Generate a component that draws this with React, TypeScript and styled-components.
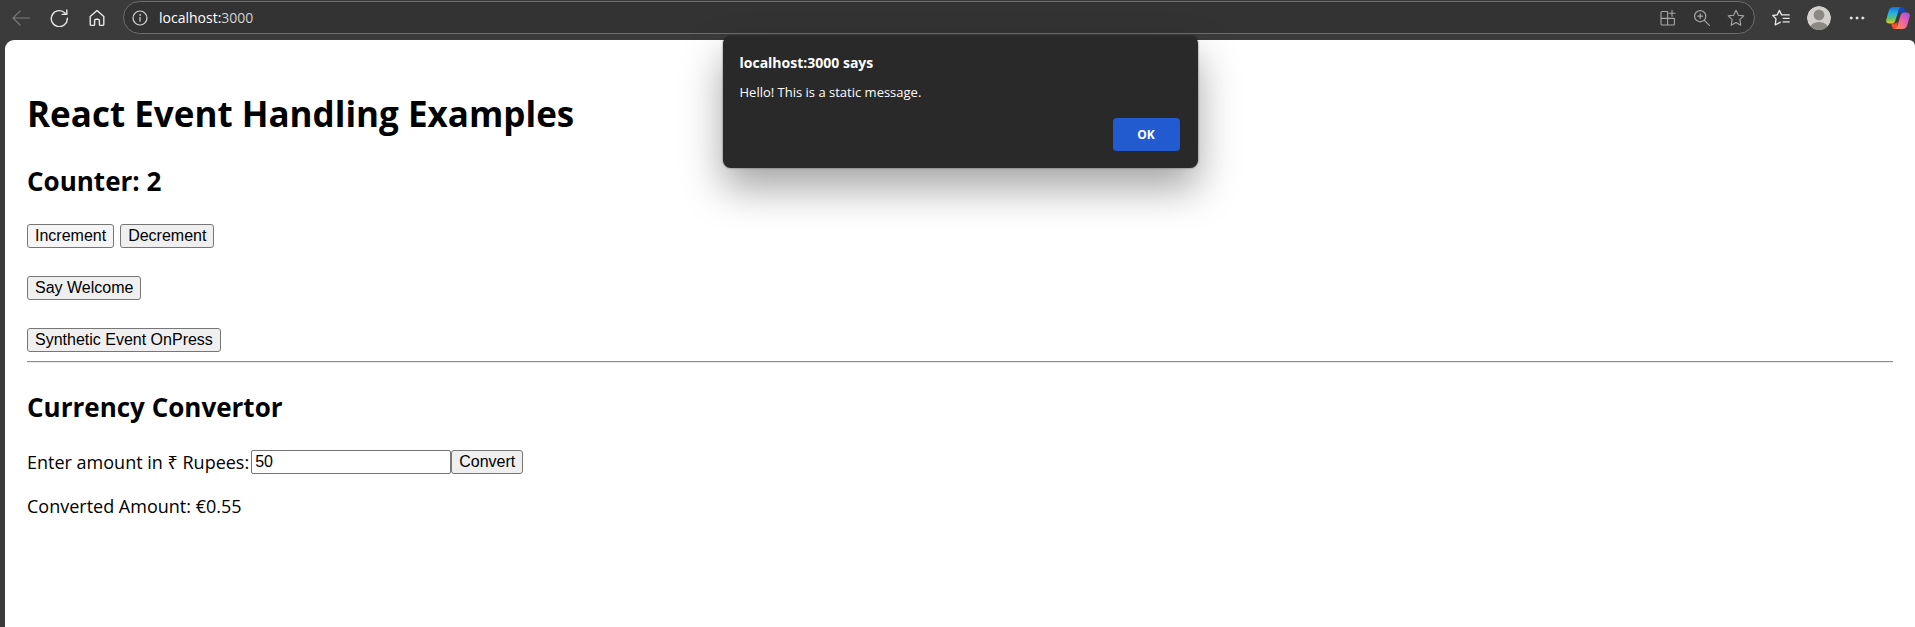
import React, { useState } from "react";
import styled, { createGlobalStyle } from "styled-components";

const ui = `"Segoe UI", "Open Sans", "Noto Sans", sans-serif`;
const arial = `"Liberation Sans", Arial, sans-serif`;

const GlobalStyle = createGlobalStyle`
  * { box-sizing: border-box; }
  body { margin: 0; background: #3b3b3b; font-family: ${ui}; color: #000; }
`;

const Window = styled.div`
  position: relative;
  display: flex;
  flex-direction: column;
  min-height: 100vh;
  overflow: hidden;
`;

const Toolbar = styled.header`
  display: flex;
  align-items: center;
  gap: 17px;
  height: 40px;
  padding: 0 5px 5px 12px;
`;

const IconGroup = styled.div<{ $gap: number }>`
  display: flex;
  flex: none;
  align-items: center;
  gap: ${(p) => p.$gap}px;
`;

const IconButton = styled.button<{ $tone?: string; $size?: number }>`
  display: flex;
  flex: none;
  align-items: center;
  justify-content: center;
  width: ${(p) => p.$size ?? 18}px;
  height: ${(p) => p.$size ?? 18}px;
  padding: 0;
  border: 0;
  background: none;
  color: ${(p) => p.$tone ?? "#e8e8e8"};

  svg {
    display: block;
    width: 100%;
    height: 100%;
    fill: none;
    stroke: currentColor;
    stroke-linecap: round;
    stroke-linejoin: round;
  }
`;

const AddressBar = styled.div`
  display: flex;
  flex: 1;
  align-items: center;
  gap: 10px;
  height: 33px;
  padding: 0 9px 0 7px;
  border: 1px solid #6e6e6e;
  border-radius: 17px;
  background: #333;
`;

const Address = styled.div`
  flex: 1;
  font-size: 14px;
  line-height: 20px;
  color: #d0d0d0;
`;

const Host = styled.span`
  color: #fff;
`;

const Page = styled.main`
  flex: 1;
  margin-left: 5px;
  padding: 46px 22px 32px;
  border-radius: 9px 6px 0 0;
  background: #fff;
`;

const Title = styled.h1`
  margin: 0;
  font-size: 35px;
  font-weight: 700;
  line-height: 56px;
`;

const Heading = styled.h2`
  margin: 21px 0 25px;
  font-size: 26px;
  font-weight: 700;
  line-height: 36px;
`;

const Actions = styled.div`
  display: flex;
  flex-direction: column;
  gap: 28px;
`;

const ButtonRow = styled.div`
  display: flex;
  gap: 6px;
`;

const Button = styled.button<{ $hovered?: boolean }>`
  height: 24px;
  padding: 0 7px;
  border: 1px solid #767676;
  border-radius: 3px;
  background: ${(p) => (p.$hovered ? "#f5f5f5" : "#efefef")};
  color: #000;
  font: 16px/20px ${arial};
`;

const Rule = styled.hr`
  height: 2px;
  margin: 9px 0 26px;
  border: 0;
  border-top: 1px solid #8e8e8e;
  border-bottom: 1px solid #ececec;
`;

const Field = styled.div`
  display: flex;
  align-items: center;
  font-size: 18px;
  line-height: 24px;
`;

const AmountInput = styled.input`
  width: 200px;
  height: 24px;
  margin-left: 2px;
  padding: 0 3px;
  border: 1px solid #767676;
  border-radius: 2px;
  font: 16px/20px ${arial};
  color: #000;
`;

const Result = styled.p`
  margin: 18px 0 0;
  font-size: 18px;
  line-height: 28px;
`;

const DialogLayer = styled.div`
  position: absolute;
  top: 36px;
  left: 5px;
  right: 0;
  display: flex;
  justify-content: center;
`;

const Dialog = styled.div`
  width: 475px;
  padding: 17px 18px 17px 17px;
  border-radius: 8px;
  background: #292929;
  color: #fff;
  box-shadow: 0 0 2px rgba(0, 0, 0, 0.6), 0 20px 40px rgba(0, 0, 0, 0.36);
`;

const DialogTitle = styled.div`
  font-size: 14px;
  font-weight: 700;
  line-height: 20px;
`;

const DialogText = styled.div`
  margin: 9px 0 16px;
  font-size: 13px;
  line-height: 20px;
`;

const DialogActions = styled.div`
  display: flex;
  justify-content: flex-end;
`;

const OkButton = styled.button`
  width: 67px;
  height: 33px;
  border: 0;
  border-radius: 4px;
  background: #225bcf;
  color: #fff;
  font: 700 12px/18px ${ui};
`;

const muted = "#a6a6a6";
const starPath = "M9 1.2l2.4 5 5.4.7-4 3.8 1 5.5L9 13.5l-4.800 2.700 1-5.500-4-3.800 5.400-.7z";

const BackIcon = () => (
  <svg viewBox="0 0 18 18" strokeWidth="1.2"><path d="M17.3 9H1M8.2 1.8L1 9l7.2 7.2" /></svg>
);

const ReloadIcon = () => (
  <svg viewBox="0 0 18 18" strokeWidth="1.4">
    <path d="M17.3 9.2A8 8 0 1 1 15.2 4.2M16.8 1v4.4h-4.6" />
  </svg>
);

const HomeIcon = () => (
  <svg viewBox="0 0 18 18" strokeWidth="1.4">
    <path d="M2.2 7.6L9 1.4l6.8 6.2v7.6c0 .7-.5 1.2-1.2 1.2h-2.2c-.6 0-1-.5-1-1v-3.6c0-1-.7-1.6-1.6-1.6H8.2c-.9 0-1.6.6-1.6 1.6v3.6c0 .5-.4 1-1 1H3.400c-.7 0-1.200-.5-1.200-1.200z" />
  </svg>
);

const InfoIcon = () => (
  <svg viewBox="0 0 18 18" strokeWidth="1.2">
    <circle cx="9" cy="9" r="7" />
    <path d="M9 8.4v3.8" />
    <circle cx="9" cy="5.9" r=".5" fill="currentColor" strokeWidth=".6" />
  </svg>
);

const AppsIcon = () => (
  <svg viewBox="0 0 18 18" strokeWidth="1.1">
    <path d="M8.6 2.5H3c-.6 0-1 .4-1 1V15c0 .6.4 1 1 1h11.4c.6 0 1-.4 1-1V9.400H2M8.600 2.500V16M13 1.200v6M10 4.200h6" />
  </svg>
);

const ZoomIcon = () => (
  <svg viewBox="0 0 18 18" strokeWidth="1.2">
    <circle cx="7.2" cy="7.2" r="5.6" />
    <path d="M11.4 11.4l5 5M7.2 4.8v4.8M4.8 7.2h4.8" />
  </svg>
);

const StarIcon = () => (
  <svg viewBox="0 0 18 18" strokeWidth="1.1"><path d={starPath} /></svg>
);

const FavouritesIcon = () => (
  <svg viewBox="0 0 18 18" strokeWidth="1.3">
    <path d="M9.6 5.9L7.4 1.4 5.2 5.9.8 6.5 4 9.9l-.8 5.9 5.2-2.6M9.6 5.9h7.6M11.2 9.3h6M11.2 12.9h6" />
  </svg>
);

const AvatarIcon = () => (
  <svg viewBox="0 0 24 24" style={{ stroke: "none" }}>
    <defs>
      <clipPath id="avatar-clip"><circle cx="12" cy="12" r="12" /></clipPath>
    </defs>
    <g clipPath="url(#avatar-clip)">
      <circle cx="12" cy="12" r="12" fill="#d2d0cd" />
      <circle cx="12" cy="9" r="5.4" fill="#8c8985" />
      <ellipse cx="12" cy="22" rx="9" ry="6" fill="#8c8985" />
    </g>
  </svg>
);

const MoreIcon = () => (
  <svg viewBox="0 0 18 18" strokeWidth=".4">
    <g fill="currentColor">
      <circle cx="3.2" cy="9" r="1.2" />
      <circle cx="9" cy="9" r="1.2" />
      <circle cx="14.8" cy="9" r="1.2" />
    </g>
  </svg>
);

const CopilotIcon = () => (
  <svg viewBox="0 0 24 24" style={{ stroke: "none" }}>
    <defs>
      <linearGradient id="cp-left" x1="0" y1="0" x2="0" y2="1">
        <stop offset="0" stopColor="#1b6fe0" />
        <stop offset=".4" stopColor="#22b4e6" />
        <stop offset=".7" stopColor="#5cc46c" />
        <stop offset="1" stopColor="#f3c41c" />
      </linearGradient>
      <linearGradient id="cp-right" x1="1" y1="0" x2=".2" y2="1">
        <stop offset="0" stopColor="#8f55e8" />
        <stop offset=".45" stopColor="#e85bb0" />
        <stop offset="1" stopColor="#fb8a5c" />
      </linearGradient>
    </defs>
    <path d="M13 1h3c1.7 0 2.3 1 2.8 2.6L19.5 6.500h-3.500c-1.800 0-2.800 1-3.300 2.600z" fill="#1746b8" />
    <path d="M11 23H9c-1.700 0-2.500-1-3-2.600L5 17.500h3.500c1.500 0 2.400-.8 2.900-2.200z" fill="#f2512e" />
    <path d="M7.500 1H15c-1.400.5-2 1.700-2.500 3.400L9.600 14c-.7 2.400-1.700 3.500-4 3.500H3.200C.8 17.500-.3 15.800.3 13.500l2.500-8.800C3.500 2.300 5 1 7.500 1z" fill="url(#cp-left)" />
    <path d="M16.500 23H9c1.400-.5 2-1.700 2.500-3.400L14.400 10c.7-2.400 1.700-3.500 4-3.500h2.400c2.400 0 3.500 1.700 2.900 4l-2.500 8.800c-.7 2.400-2.200 3.700-4.700 3.700z" fill="url(#cp-right)" />
  </svg>
);

export default function App() {
  const [count, setCount] = useState(2);
  const [amount, setAmount] = useState("50");
  const [rupees, setRupees] = useState(50);
  const [message, setMessage] = useState("Hello! This is a static message.");

  return (
    <>
      <GlobalStyle />
      <Window>
        <Toolbar>
          <IconGroup $gap={20}>
            <IconButton aria-label="Back" $tone="#7c7c7c"><BackIcon /></IconButton>
            <IconButton aria-label="Refresh"><ReloadIcon /></IconButton>
            <IconButton aria-label="Home"><HomeIcon /></IconButton>
          </IconGroup>
          <AddressBar>
            <IconButton aria-label="Site information" $tone="#d6d6d6"><InfoIcon /></IconButton>
            <Address><Host>localhost:</Host>3000</Address>
            <IconGroup $gap={16}>
              <IconButton aria-label="Install app" $tone={muted}><AppsIcon /></IconButton>
              <IconButton aria-label="Zoom" $tone={muted}><ZoomIcon /></IconButton>
              <IconButton aria-label="Add to favourites" $tone={muted}><StarIcon /></IconButton>
            </IconGroup>
          </AddressBar>
          <IconGroup $gap={20}>
            <IconGroup $gap={17}>
              <IconButton aria-label="Favourites"><FavouritesIcon /></IconButton>
              <IconButton aria-label="Profile" $size={24}><AvatarIcon /></IconButton>
              <IconButton aria-label="More"><MoreIcon /></IconButton>
            </IconGroup>
            <IconButton aria-label="Copilot" $size={24}><CopilotIcon /></IconButton>
          </IconGroup>
        </Toolbar>
        <Page>
          <Title>React Event Handling Examples</Title>
          <Heading>Counter: {count}</Heading>
          <Actions>
            <ButtonRow>
              <Button
                $hovered
                onClick={() => {
                  setCount(count + 1);
                  setMessage("Hello! This is a static message.");
                }}
              >
                Increment
              </Button>
              <Button onClick={() => setCount(count - 1)}>Decrement</Button>
            </ButtonRow>
            <ButtonRow>
              <Button onClick={() => setMessage("Welcome")}>Say Welcome</Button>
            </ButtonRow>
            <ButtonRow>
              <Button onClick={() => setMessage("I was clicked")}>Synthetic Event OnPress</Button>
            </ButtonRow>
          </Actions>
          <Rule />
          <Heading>Currency Convertor</Heading>
          <Field>
            <label htmlFor="amount">Enter amount in ₹ Rupees:</label>
            <AmountInput id="amount" value={amount} onChange={(e) => setAmount(e.target.value)} />
            <Button onClick={() => setRupees(Number(amount))}>Convert</Button>
          </Field>
          <Result>Converted Amount: €{(rupees * 0.011).toFixed(2)}</Result>
        </Page>
        {message && (
          <DialogLayer>
            <Dialog role="alertdialog" aria-label="localhost:3000 says">
              <DialogTitle>localhost:3000 says</DialogTitle>
              <DialogText>{message}</DialogText>
              <DialogActions>
                <OkButton onClick={() => setMessage("")}>OK</OkButton>
              </DialogActions>
            </Dialog>
          </DialogLayer>
        )}
      </Window>
    </>
  );
}
